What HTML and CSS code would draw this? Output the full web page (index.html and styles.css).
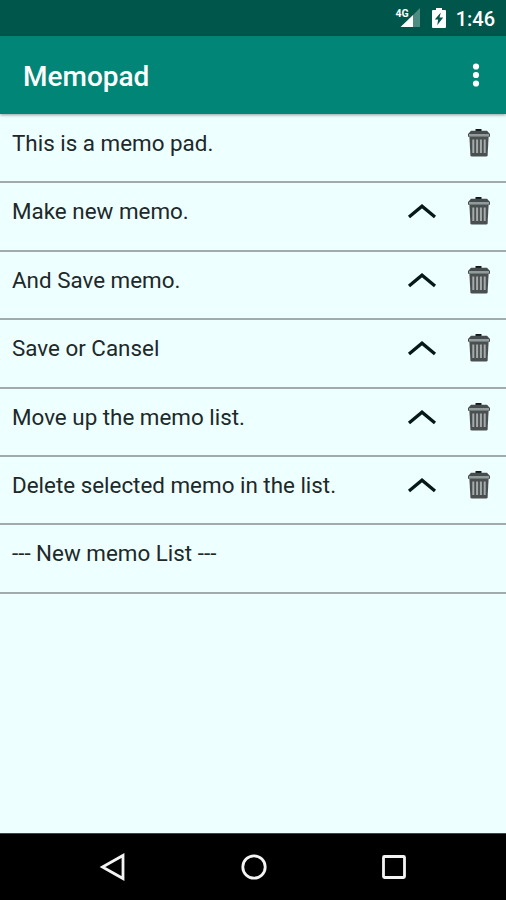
FILE: index.html
```html
<!DOCTYPE html>
<html lang="en">
<head>
<meta charset="utf-8">
<title>Memopad</title>
<link rel="stylesheet" href="styles.css">
</head>
<body>
<svg width="0" height="0" class="defs" aria-hidden="true">
  <symbol id="up" viewBox="0 0 32 20"><path d="M3 16 16 5.200 29 16" fill="none" stroke="#071819" stroke-width="3.300"/></symbol>
  <symbol id="trash" viewBox="0 0 26 30">
    <path d="M9.500 1h6v2h-6z" fill="#111718"/>
    <path d="M5 2.800h16l3 3.200v2.800H2V6z" fill="#464c4d"/>
    <path d="M3 6h20v2H3z" fill="#929b9c"/>
    <path d="M3.400 9h19.200l-1 18.200q-.1 1.300-1.400 1.300H5.800q-1.300 0-1.400-1.300z" fill="#4b4f50"/>
    <path d="M7.300 11.500v13.500M11.100 11.500v13.500M14.900 11.500v13.500M18.700 11.500v13.500" stroke="#a4abac" stroke-width="2"/>
  </symbol>
</svg>
<div class="screen">
  <div class="status">
    <svg class="signal" width="26" height="22" viewBox="0 0 26 22">
      <path d="M25 1v19h-7V8z" fill="#4d8c81"/>
      <path d="M18 8v12H5.500z" fill="#fff"/>
      <text x="0.500" y="10" class="network">4G</text>
    </svg>
    <svg class="battery" width="14" height="22" viewBox="0 0 14 22">
      <path d="M4 1h6v2h3q1 0 1 1v16q0 1-1 1H1q-1 0-1-1V4q0-1 1-1h3z" fill="#fff"/>
      <path d="M8.800 5.500 2.800 12.500h3.400l-1 5.800 6-7.800H7.500z" fill="#00564a"/>
    </svg>
    <span class="clock">1:46</span>
  </div>
  <header class="appbar">
    <h1>Memopad</h1>
    <svg width="8" height="26" viewBox="0 0 8 26" fill="#fff"><circle cx="4" cy="4.500" r="3.100"/><circle cx="4" cy="13" r="3.100"/><circle cx="4" cy="21.500" r="3.100"/></svg>
  </header>
  <main class="list">
    <div class="row"><span class="memo">This is a memo pad.</span><svg class="trash"><use href="#trash"/></svg></div>
    <div class="row"><span class="memo">Make new memo.</span><svg class="up"><use href="#up"/></svg><svg class="trash"><use href="#trash"/></svg></div>
    <div class="row"><span class="memo">And Save memo.</span><svg class="up"><use href="#up"/></svg><svg class="trash"><use href="#trash"/></svg></div>
    <div class="row"><span class="memo">Save or Cansel</span><svg class="up"><use href="#up"/></svg><svg class="trash"><use href="#trash"/></svg></div>
    <div class="row"><span class="memo">Move up the memo list.</span><svg class="up"><use href="#up"/></svg><svg class="trash"><use href="#trash"/></svg></div>
    <div class="row"><span class="memo">Delete selected memo in the list.</span><svg class="up"><use href="#up"/></svg><svg class="trash"><use href="#trash"/></svg></div>
    <div class="row"><span class="memo">--- New memo List ---</span></div>
  </main>
  <nav class="navbar">
    <svg width="28" height="30" viewBox="0 0 28 30"><path d="M24 3.500v23L3.500 15z"/></svg>
    <svg width="28" height="30" viewBox="0 0 28 30"><circle cx="14" cy="15" r="11.200"/></svg>
    <svg width="28" height="30" viewBox="0 0 28 30"><rect x="3.500" y="4.500" width="21" height="21" rx="1"/></svg>
  </nav>
</div>
</body>
</html>
```
FILE: styles.css
```css
* { box-sizing: border-box; }
body { margin: 0; font-family: Roboto, "Liberation Sans", sans-serif; }
.defs { display: none; }
.screen { width: 506px; height: 900px; display: flex; flex-direction: column; background: #edffff; overflow: hidden; }
.status { height: 36px; flex: none; background: #00564a; display: flex; justify-content: flex-end; align-items: center; padding-right: 11px; color: #fff; }
.signal { margin-right: 11px; }
.battery { margin-right: 10px; }
.network { font-size: 10.5px; font-weight: 700; fill: #fff; }
.clock { font-size: 20px; font-weight: 500; line-height: 36px; padding-top: 2px; }
.appbar { height: 78px; flex: none; background: #018577; color: #fff; display: flex; align-items: center; justify-content: space-between; padding: 0 26px 0 23px; box-shadow: 0 1px 3px rgba(0, 0, 0, .4); z-index: 1; }
.appbar h1 { margin: 4px 0 0; font-size: 28px; font-weight: 500; line-height: 36px; }
.list { flex: 1; padding-top: 1px; }
.row { height: 68.4px; border-bottom: 2px solid #a1aaac; display: flex; align-items: flex-start; padding: 12px 14px 0 12px; }
.memo { flex: 1; font-size: 22.4px; line-height: 32px; color: #202829; white-space: nowrap; }
.up { width: 32px; height: 20px; margin: 6px 28px 0 0; }
.trash { width: 26px; height: 30px; margin-top: 1px; }
.navbar { height: 67px; flex: none; background: #000; display: flex; justify-content: center; align-items: center; gap: 112.5px; border-top: 1px solid #444; padding-left: 1px; }
.navbar svg { fill: none; stroke: #f4f4f4; stroke-width: 2.8; }
```
